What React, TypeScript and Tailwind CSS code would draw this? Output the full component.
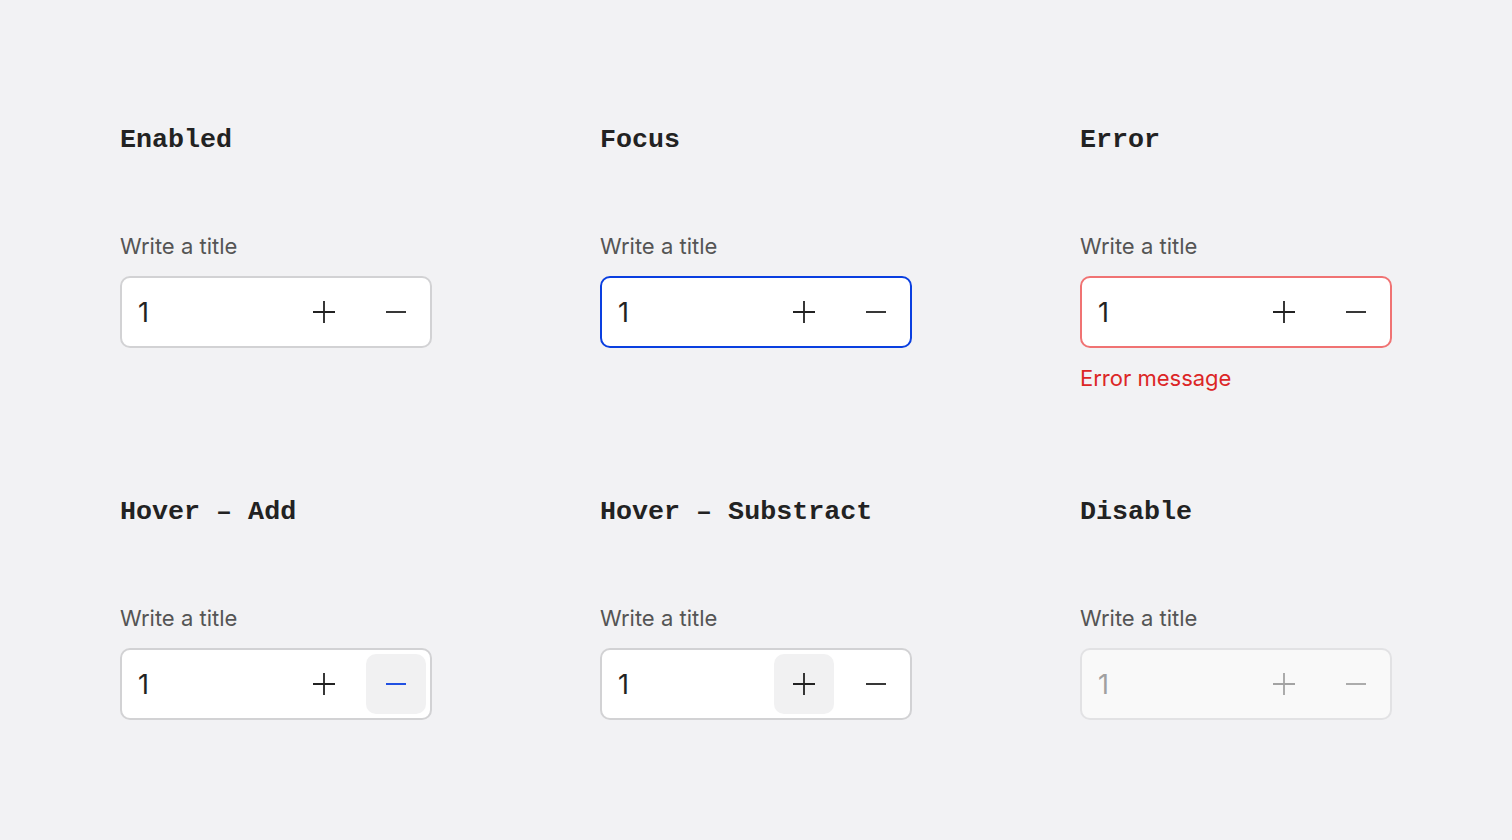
type Variant = "enabled" | "focus" | "error" | "hoverAdd" | "hoverSub" | "disabled";

type Sample = {
  title: string;
  variant: Variant;
};

const samples: Sample[] = [
  { title: "Enabled", variant: "enabled" },
  { title: "Focus", variant: "focus" },
  { title: "Error", variant: "error" },
  { title: "Hover – Add", variant: "hoverSub" },
  { title: "Hover – Substract", variant: "hoverAdd" },
  { title: "Disable", variant: "disabled" },
];

function PlusIcon() {
  return (
    <svg width="22" height="22" viewBox="0 0 22 22" fill="none" stroke="currentColor" strokeWidth="1.8">
      <path d="M11 0v22M0 11h22" />
    </svg>
  );
}

function MinusIcon() {
  return (
    <svg width="22" height="22" viewBox="0 0 22 22" fill="none" stroke="currentColor" strokeWidth="1.8">
      <path d="M1 11h20" />
    </svg>
  );
}

function Stepper({ variant }: { variant: Variant }) {
  const disabled = variant === "disabled";

  const border =
    variant === "focus"
      ? "border-[#0a3fe0] bg-white"
      : variant === "error"
        ? "border-[#f07373] bg-white"
        : disabled
          ? "border-[#e2e2e4] bg-[#f9f9f9]"
          : "border-[#d2d2d4] bg-white";

  const iconColor = disabled ? "text-[#a3a3a3]" : "text-[#222]";

  return (
    <div
      className={`flex items-center w-[312px] h-[72px] rounded-[10px] border-2 pl-[16px] pr-[4px] py-[4px] ${border}`}
    >
      <span
        className={`flex-1 text-[27px] leading-none ${disabled ? "text-[#a0a0a0]" : "text-[#222]"}`}
      >
        1
      </span>
      <div className="flex items-center gap-3 h-full">
        <button
          className={`w-[60px] h-[60px] flex items-center justify-center rounded-[10px] ${
            variant === "hoverAdd" ? "bg-[#f1f1f2]" : ""
          } ${iconColor}`}
        >
          <PlusIcon />
        </button>
        <button
          className={`w-[60px] h-[60px] flex items-center justify-center rounded-[10px] ${
            variant === "hoverSub" ? "bg-[#f1f1f2] text-[#0a3fe0]" : iconColor
          }`}
        >
          <MinusIcon />
        </button>
      </div>
    </div>
  );
}

export default function App() {
  return (
    <div
      className="min-h-screen w-full bg-[#f2f2f4] pl-[120px] pt-[125px]"
      style={{ fontFamily: "Inter, 'Noto Sans', sans-serif" }}
    >
      <div className="grid grid-cols-[480px_480px_312px]">
        {samples.map((s) => (
          <div key={s.title} className="flex flex-col h-[372px]">
            <h2 className="font-['Liberation_Mono',monospace] font-bold text-[26.7px] leading-[30px] text-[#222] whitespace-pre">
              {s.title}
            </h2>
            <p className="mt-[77px] text-[22px] leading-[28px] text-[#555]">
              Write a title
            </p>
            <div className="mt-[16px]">
              <Stepper variant={s.variant} />
            </div>
            {s.variant === "error" && (
              <p className="mt-[16px] text-[22px] leading-[28px] text-[#dc2626]">
                Error message
              </p>
            )}
          </div>
        ))}
      </div>
    </div>
  );
}
